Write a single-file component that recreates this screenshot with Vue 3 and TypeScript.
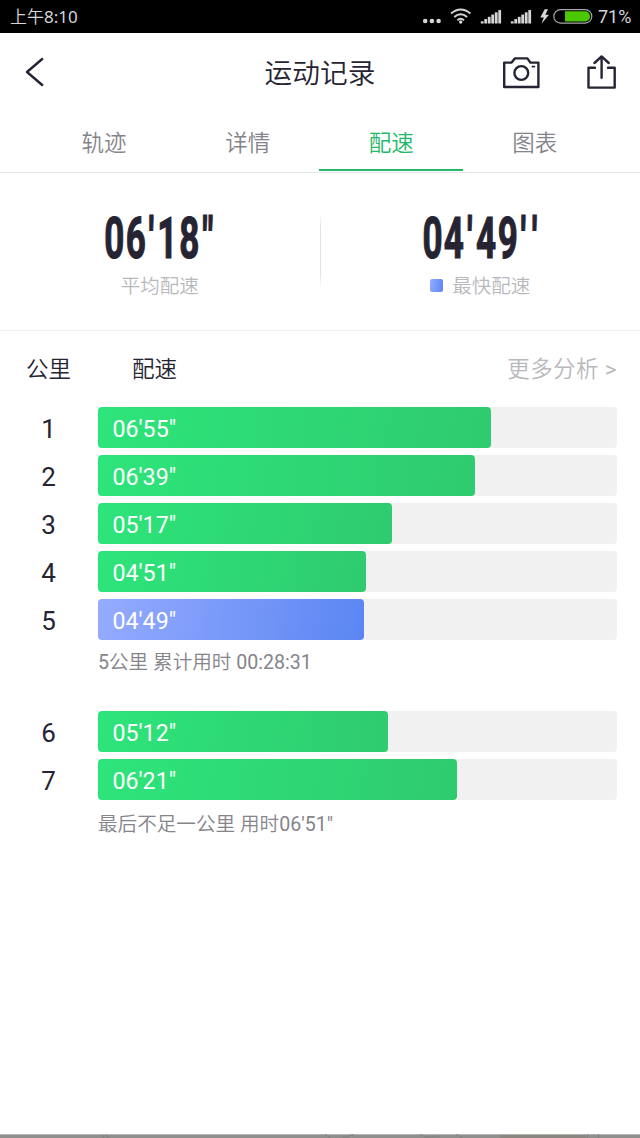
<script setup lang="ts">
interface Split {
  km: number
  pace: string
  width: number
  fastest?: boolean
}

interface SplitGroup {
  splits: Split[]
  note: string
}

interface Glyph {
  char: string
  x: number
}

const tabs: string[] = ['轨迹', '详情', '配速', '图表']
const activeTab = '配速'

const groups: SplitGroup[] = [
  {
    splits: [
      { km: 1, pace: '06\'55"', width: 393 },
      { km: 2, pace: '06\'39"', width: 377.4 },
      { km: 3, pace: '05\'17"', width: 294 },
      { km: 4, pace: '04\'51"', width: 268 },
      { km: 5, pace: '04\'49"', width: 266, fastest: true },
    ],
    note: '5公里 累计用时 00:28:31',
  },
  {
    splits: [
      { km: 6, pace: '05\'12"', width: 289.5 },
      { km: 7, pace: '06\'21"', width: 359 },
    ],
    note: '最后不足一公里 用时06\'51"',
  },
]

// Condensed numerals: glyphs are squeezed horizontally and spaced individually.
const squeeze = 0.62
const spaced = (text: string, centers: number[]): Glyph[] =>
  [...text].map((char, i) => ({ char, x: centers[i] / squeeze }))

const average = spaced('06\'18"', [14.3, 35.7, 51.3, 67.3, 89.2, 107.8])
const best = spaced("04'49''", [12.5, 33.8, 49.8, 66, 87.7, 103.3, 114.7])
const signalBars: number[] = [0, 1, 2, 3, 4, 5]
</script>

<template>
  <div class="screen">
    <header class="status">
      <span class="clock">上午8:10</span>
      <svg class="status-icons" width="184" height="32" viewBox="0 0 184 32">
        <g fill="#d6d6d6">
          <circle cx="5.2" cy="21" r="2.3" />
          <circle cx="11.9" cy="21" r="2.3" />
          <circle cx="18.6" cy="21" r="2.3" />
        </g>
        <g fill="none" stroke="#d6d6d6" stroke-width="2">
          <path d="M31 13.5Q40.7 5.5 50.4 13.5" />
          <path d="M34.3 17Q40.7 11.5 47.1 17" />
          <path d="M37.4 20.2Q40.7 17.3 44 20.2" />
        </g>
        <circle cx="40.7" cy="22" r="1.7" fill="#d6d6d6" />
        <g v-for="start in [60.8, 90.8]" :key="start" fill="#d6d6d6">
          <rect
            v-for="n in signalBars"
            :key="n"
            :x="start + n * 3.5"
            :y="21.3 - n * 2.25"
            width="2.8"
            :height="2.2 + n * 2.25"
          />
        </g>
        <path d="M124.7 9.2L120.3 17.4H123.8L121.5 23.8L129 14.7H125.3L128 9.2Z" fill="#d6d6d6" />
        <rect x="133.8" y="9.7" width="38" height="13.4" rx="6.7" fill="#000" stroke="#a9a9a9" stroke-width="1.2" />
        <path d="M145 11.3H165A5.1 5.1 0 0 1 165 21.5H145Z" fill="#4cc800" />
      </svg>
      <span class="percent">71%</span>
    </header>

    <nav class="title-bar">
      <svg class="back" width="40" height="40" viewBox="0 0 40 40">
        <path d="M32.2 6L17 19L32.2 32" />
      </svg>
      <h1>运动记录</h1>
      <div class="actions">
        <svg width="40" height="36" viewBox="0 0 40 36">
          <path d="M3.2 7.6H10.6L13.8 3.4H26.4L29.4 7.6H37.4V32H3.2Z" />
          <circle cx="20.3" cy="18" r="6.9" />
          <path class="flash" d="M31.4 11.6H33.4" />
        </svg>
        <svg width="32" height="36" viewBox="0 0 32 36">
          <path d="M10 12.8H3.5V32.6H29.7V12.8H23M16.6 22.7V1.6M9.5 8L16.6 1.4L23.7 8" />
        </svg>
      </div>
    </nav>

    <div class="tabs">
      <div v-for="tab in tabs" :key="tab" class="tab" :class="{ active: tab === activeTab }">{{ tab }}</div>
    </div>

    <section class="summary">
      <div class="metric">
        <svg class="figure" width="120" height="74" viewBox="0 0 120 74">
          <g transform="scale(0.62 1)">
            <text v-for="(g, i) in average" :key="i" :x="g.x" y="56.6">{{ g.char }}</text>
          </g>
        </svg>
        <div class="caption">平均配速</div>
      </div>
      <div class="divider"></div>
      <div class="metric">
        <svg class="figure" width="120" height="74" viewBox="0 0 120 74">
          <g transform="scale(0.62 1)">
            <text v-for="(g, i) in best" :key="i" :x="g.x" y="56.6">{{ g.char }}</text>
          </g>
        </svg>
        <div class="caption"><i class="swatch"></i>最快配速</div>
      </div>
    </section>

    <main class="details">
      <div class="heading">
        <span class="km-title">公里</span>
        <span>配速</span>
        <span class="more">更多分析 &gt;</span>
      </div>
      <section v-for="group in groups" :key="group.note" class="group">
        <div v-for="split in group.splits" :key="split.km" class="row">
          <span class="km">{{ split.km }}</span>
          <div class="track">
            <div class="bar" :class="{ fastest: split.fastest }" :style="{ width: split.width + 'px' }">
              {{ split.pace }}
            </div>
          </div>
        </div>
        <p class="note">{{ group.note }}</p>
      </section>
    </main>
    <svg class="bottom-edge" width="640" height="4" viewBox="0 0 640 4">
      <rect width="640" height="4" fill="#8f8f8d" />
      <rect width="640" height="1" fill="#b4b4b2" />
      <rect x="500" y="1" width="86" height="3" fill="#8c8681" />
      <g fill="none" stroke="#7b7b7d" stroke-width="0.7">
        <path d="M102 0.5L104 4M106 0.5L108 4M325 0L330 4M343 4L354 0M420 0Q426 5 440 2M456 0L462 4M587.5 0V4M598.5 0V4" />
      </g>
    </svg>
  </div>
</template>

<style>
body {
  margin: 0;
  background: #fff;
}
</style>

<style scoped>
.screen {
  width: 640px;
  height: 1138px;
  box-sizing: border-box;
  overflow: hidden;
  display: flex;
  flex-direction: column;
  background: #fff;
  color: #262433;
  font-family: Roboto, "Noto Sans CJK SC DemiLight", "Noto Sans CJK SC Light", "Noto Sans CJK SC", sans-serif;
  font-weight: 400;
}
.status {
  flex: none;
  height: 32.5px;
  background: #000;
  color: #d6d6d6;
  display: flex;
  align-items: center;
  padding: 0 10px;
}
.clock {
  flex: 1;
  font-family: "Noto Sans", "Noto Sans CJK SC DemiLight", "Noto Sans CJK SC Light", "Noto Sans CJK SC", sans-serif;
  font-size: 17px;
  line-height: 32px;
  padding-top: 1px;
}
.status-icons {
  margin-right: -6px;
}
.percent {
  width: 32px;
  font-size: 18px;
}
.title-bar {
  flex: none;
  height: 80.5px;
  display: grid;
  grid-template-columns: 200px 1fr 200px;
  align-items: center;
}
.title-bar svg {
  fill: none;
  stroke: #262433;
  stroke-width: 2.4;
  stroke-linejoin: round;
  stroke-linecap: round;
}
.title-bar .flash {
  stroke-width: 1.8;
}
.back {
  margin-left: 10px;
}
h1 {
  margin: 2px 0 0;
  text-align: center;
  font-size: 27.7px;
  line-height: 40px;
  font-weight: 400;
}
.actions {
  display: flex;
  justify-content: flex-end;
  gap: 44px;
  padding-right: 23px;
}
.tabs {
  flex: none;
  height: 60px;
  box-sizing: border-box;
  display: flex;
  padding: 0 32.3px;
  border-bottom: 1px solid #e6e6e6;
}
.tab {
  width: 143.6px;
  height: 58px;
  box-sizing: border-box;
  text-align: center;
  font-size: 22.5px;
  line-height: 60px;
  color: #85848b;
}
.tab.active {
  color: #24b968;
  border-bottom: 2px solid #24b968;
}
.summary {
  flex: none;
  height: 158px;
  box-sizing: border-box;
  display: flex;
  border-bottom: 1px solid #eee;
}
.metric {
  flex: 1;
  display: flex;
  flex-direction: column;
  align-items: center;
  padding-top: 28px;
}
.figure text {
  font-family: Roboto, sans-serif;
  font-size: 56.5px;
  font-weight: 700;
  text-anchor: middle;
  fill: #262433;
  stroke: #262433;
  stroke-width: 1.2;
}
.caption {
  display: flex;
  align-items: center;
  font-size: 19.5px;
  line-height: 28px;
  margin-top: -2px;
  color: #b9b9bd;
}
.swatch {
  width: 13px;
  height: 13px;
  margin: 0 9px 3px 0;
  border-radius: 2px;
  background: linear-gradient(100deg, #92acff, #5d86f3);
}
.divider {
  width: 1px;
  height: 76px;
  margin-top: 40px;
  background: linear-gradient(#fff, #e2e2e2 20%, #e2e2e2 80%, #fff);
}
.details {
  flex: 1;
  padding: 0 23px 0 26px;
}
.heading {
  display: flex;
  height: 75.5px;
  font-size: 22.5px;
  line-height: 76px;
}
.km-title {
  width: 106px;
}
.more {
  margin-left: auto;
  color: #b9b9bd;
  letter-spacing: 0.4px;
}
.group {
  margin-bottom: 34px;
}
.group:last-child .note {
  padding-top: 3px;
}
.row {
  height: 41px;
  margin-bottom: 7px;
  display: flex;
  line-height: 44px;
}
.km {
  width: 45px;
  margin-right: 27px;
  text-align: center;
  font-size: 26px;
}
.track {
  flex: 1;
  background: #f1f1f1;
  border-radius: 4px;
}
.bar {
  height: 41px;
  box-sizing: border-box;
  padding-left: 14.5px;
  border-radius: 4px;
  color: #fff;
  font-size: 23.2px;
  background: linear-gradient(100deg, #2de57a, #2fcb6f);
}
.bar.fastest {
  background: linear-gradient(100deg, #95abff, #5b86f2);
}
.note {
  margin: 0 0 0 72px;
  padding-top: 1px;
  font-size: 19.6px;
  line-height: 29px;
  color: #85848b;
}
.bottom-edge {
  flex: none;
  display: block;
}
</style>
